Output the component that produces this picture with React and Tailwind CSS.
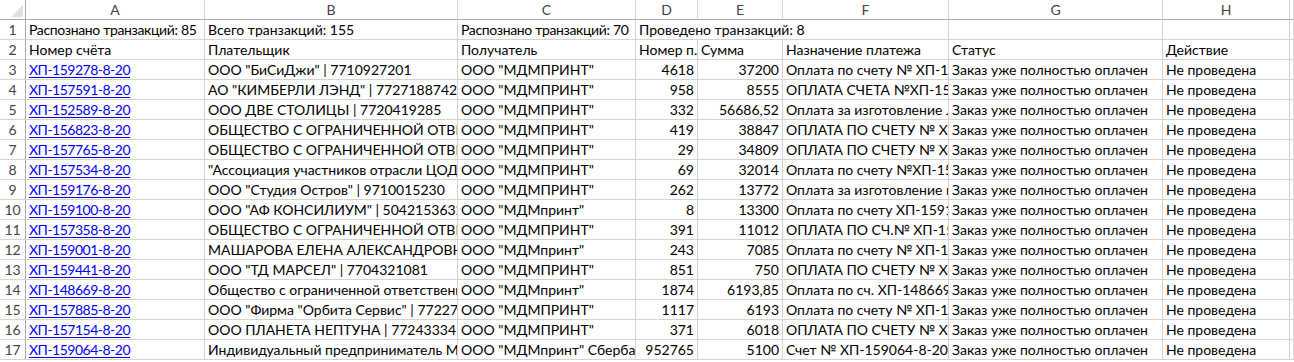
import React from 'react';

const COLS = ['A', 'B', 'C', 'D', 'E', 'F', 'G', 'H', ''];

const ROW1 = ['Распознано транзакций: 85', 'Всего транзакций: 155', 'Распознано транзакций: 70', 'Проведено транзакций: 8', '', '', '', '', ''];
const ROW2 = ['Номер счёта', 'Плательщик', 'Получатель', 'Номер п.', 'Сумма', 'Назначение платежа', 'Статус', 'Действие', ''];

const DATA = [
  ['ХП-159278-8-20', 'ООО "БиСиДжи" | 7710927201', 'ООО "МДМПРИНТ"', '4618', '37200', 'Оплата по счету № ХП-159278-8-20'],
  ['ХП-157591-8-20', 'АО "КИМБЕРЛИ ЛЭНД" | 7727188742', 'ООО "МДМПРИНТ"', '958', '8555', 'ОПЛАТА СЧЕТА №ХП-157591-8-20'],
  ['ХП-152589-8-20', 'ООО ДВЕ СТОЛИЦЫ | 7720419285', 'ООО "МДМПРИНТ"', '332', '56686,52', 'Оплата за изготовление листовок'],
  ['ХП-156823-8-20', 'ОБЩЕСТВО С ОГРАНИЧЕННОЙ ОТВЕТСТВЕННОСТЬЮ', 'ООО "МДМПРИНТ"', '419', '38847', 'ОПЛАТА ПО СЧЕТУ № ХП-156823-8-20'],
  ['ХП-157765-8-20', 'ОБЩЕСТВО С ОГРАНИЧЕННОЙ ОТВЕТСТВЕННОСТЬЮ', 'ООО "МДМПРИНТ"', '29', '34809', 'ОПЛАТА ПО СЧЕТУ № ХП-157765-8-20'],
  ['ХП-157534-8-20', '"Ассоциация участников отрасли ЦОД" | 7703', 'ООО "МДМПРИНТ"', '69', '32014', 'Оплата по счету №ХП-157534-8-20'],
  ['ХП-159176-8-20', 'ООО "Студия Остров" | 9710015230', 'ООО "МДМПРИНТ"', '262', '13772', 'Оплата за изготовление каталогов'],
  ['ХП-159100-8-20', 'ООО "АФ КОНСИЛИУМ" | 5042153632', 'ООО "МДМпринт"', '8', '13300', 'Оплата по счету ХП-159100-8-20'],
  ['ХП-157358-8-20', 'ОБЩЕСТВО С ОГРАНИЧЕННОЙ ОТВЕТСТВЕННОСТЬЮ', 'ООО "МДМПРИНТ"', '391', '11012', 'ОПЛАТА ПО СЧ.№ ХП-157358-8-20'],
  ['ХП-159001-8-20', 'МАШАРОВА ЕЛЕНА АЛЕКСАНДРОВНА (ИП) | 7701', 'ООО "МДМпринт"', '243', '7085', 'Оплата по счету № ХП-159001-8-20'],
  ['ХП-159441-8-20', 'ООО "ТД МАРСЕЛ" | 7704321081', 'ООО "МДМПРИНТ"', '851', '750', 'ОПЛАТА ПО СЧЕТУ № ХП-159441-8-20'],
  ['ХП-148669-8-20', 'Общество с ограниченной ответственностью', 'ООО "МДМпринт"', '1874', '6193,85', 'Оплата по сч. ХП-148669-8-20'],
  ['ХП-157885-8-20', 'ООО "Фирма "Орбита Сервис" | 7722768800', 'ООО "МДМПРИНТ"', '1117', '6193', 'Оплата по счету № ХП-157885-8-20'],
  ['ХП-157154-8-20', 'ООО ПЛАНЕТА НЕПТУНА | 7724333455', 'ООО "МДМПРИНТ"', '371', '6018', 'ОПЛАТА ПО СЧЕТУ № ХП-157154-8-20'],
  ['ХП-159064-8-20', 'Индивидуальный предприниматель Мамонтов', 'ООО "МДМпринт" Сбербанк', '952765', '5100', 'Счет № ХП-159064-8-20 от 05.08.2020'],
];

const font = { fontFamily: 'Lato, "Noto Sans", sans-serif' };

function HeadCell({ children }) {
  return (
    <div className="h-[20px] border-r border-b border-r-[#d5d5d5] border-b-[#ababab] bg-white text-center text-[14px] leading-[20px] text-[#444]">
      {children}
    </div>
  );
}

function RowNum({ n }) {
  return (
    <div className="h-[20px] border-r border-b border-r-[#ababab] border-b-[#d5d5d5] bg-white text-center text-[14px] leading-[20px] text-[#444]">
      {n}
    </div>
  );
}

function Cell({ children, right, link, overflow, noBorder, tight }) {
  return (
    <div
      className={`relative h-[20px] border-b border-[#d4d4d4] whitespace-nowrap text-[14px] leading-[20px] text-black ${
        noBorder ? '' : 'border-r'
      } ${overflow ? 'z-10 overflow-visible' : 'overflow-hidden'} ${right ? 'pr-[3px] text-right' : 'pl-[3px]'} ${
        tight ? 'tracking-[-0.35px]' : ''
      }`}
    >
      {link ? (
        <span className="tracking-[-0.5px] text-[#0000ff] underline underline-offset-2">{children}</span>
      ) : (
        children
      )}
    </div>
  );
}

export default function App() {
  return (
    <div className="h-[362px] w-[1294px] overflow-hidden bg-white" style={font}>
      <div className="grid grid-cols-[26px_179px_253px_178px_62px_85px_166px_214px_127px_1fr]">
        <div className="relative h-[20px] border-r border-b border-r-[#ababab] border-b-[#ababab] bg-white">
          <svg className="absolute left-0 top-0" width="25" height="19" viewBox="0 0 25 19">
            <polygon points="23,5 23,17 11,17" fill="#dfdfdf" />
          </svg>
        </div>
        {COLS.map((c, i) => (
          <HeadCell key={i}>{c}</HeadCell>
        ))}

        <RowNum n={1} />
        {ROW1.map((t, i) => (
          <Cell key={i} overflow={i === 3} noBorder={i === 3 || i === 4} tight={i === 0 || i === 2}>
            {t}
          </Cell>
        ))}

        <RowNum n={2} />
        {ROW2.map((t, i) => (
          <Cell key={i}>{t}</Cell>
        ))}

        {DATA.map((r, ri) => (
          <React.Fragment key={ri}>
            <RowNum n={ri + 3} />
            <Cell link>{r[0]}</Cell>
            <Cell>{r[1]}</Cell>
            <Cell>{r[2]}</Cell>
            <Cell right>{r[3]}</Cell>
            <Cell right>{r[4]}</Cell>
            <Cell>{r[5]}</Cell>
            <Cell>Заказ уже полностью оплачен</Cell>
            <Cell>Не проведена</Cell>
            <Cell />
          </React.Fragment>
        ))}
      </div>
    </div>
  );
}
